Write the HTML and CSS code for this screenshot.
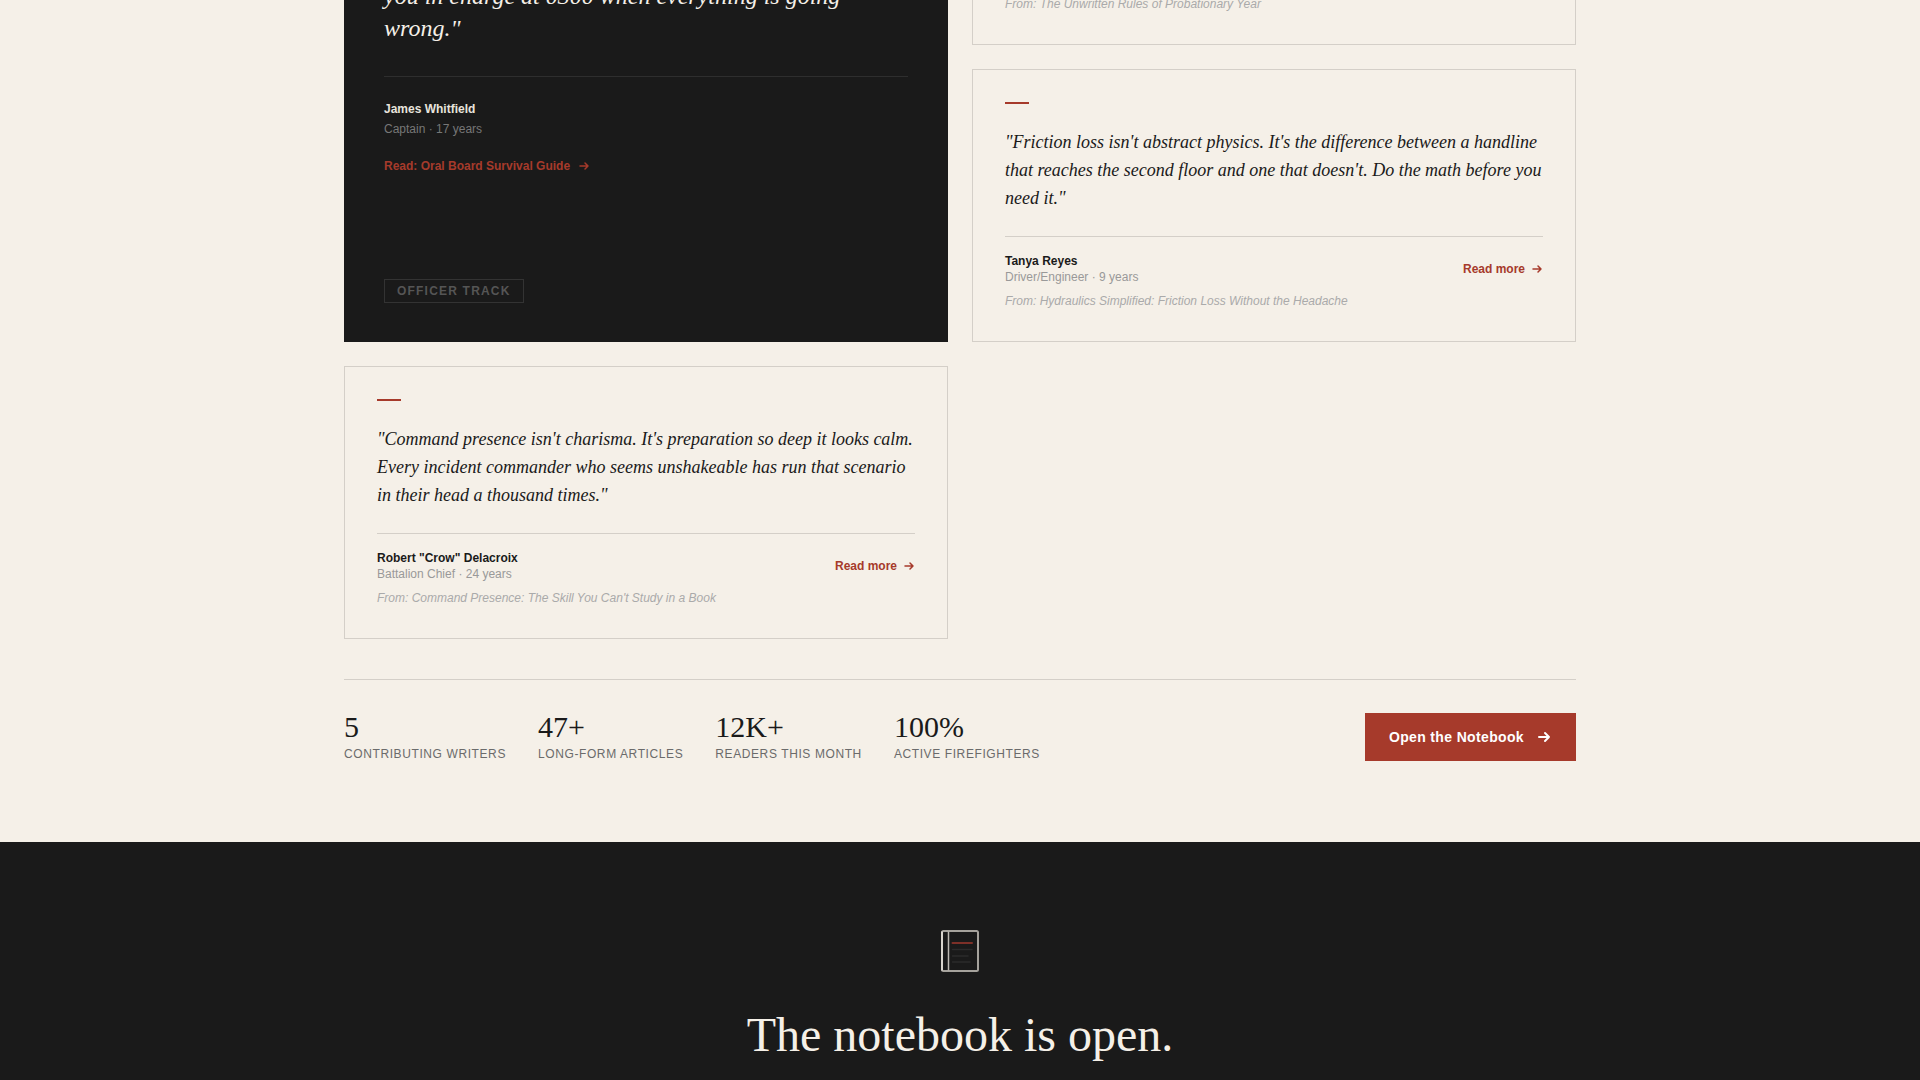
FILE: index.html
```html
<!DOCTYPE html>
<html lang="en">
<head>
<meta charset="utf-8">
<meta name="viewport" content="width=device-width, initial-scale=1">
<title>The Notebook</title>
<link rel="stylesheet" href="styles.css">
</head>
<body>
<main>
  <section class="voices">
    <div class="container">
      <div class="voices-grid">
        <article class="feature">
          <blockquote class="feature-quote">you in charge at 0300 when everything is going wrong."</blockquote>
          <div class="feature-author">
            <p class="name">James Whitfield</p>
            <p class="role">Captain · 17 years</p>
            <a class="read-link" href="#">Read: Oral Board Survival Guide
              <svg class="arrow" viewBox="0 0 12 12" aria-hidden="true"><path d="M2 6h8M7 3l3 3-3 3"/></svg>
            </a>
          </div>
          <span class="tag">Officer Track</span>
        </article>

        <article class="card card-first">
          <p class="source">From: The Unwritten Rules of Probationary Year</p>
        </article>

        <article class="card">
          <div class="accent"></div>
          <blockquote class="quote">"Friction loss isn't abstract physics. It's the difference between a handline that reaches the second floor and one that doesn't. Do the math before you need it."</blockquote>
          <div class="byline">
            <div>
              <p class="name">Tanya Reyes</p>
              <p class="role">Driver/Engineer · 9 years</p>
            </div>
            <a class="read-link" href="#">Read more
              <svg class="arrow" viewBox="0 0 12 12" aria-hidden="true"><path d="M2 6h8M7 3l3 3-3 3"/></svg>
            </a>
          </div>
          <p class="source">From: Hydraulics Simplified: Friction Loss Without the Headache</p>
        </article>

        <article class="card">
          <div class="accent"></div>
          <blockquote class="quote">"Command presence isn't charisma. It's preparation so deep it looks calm. Every incident commander who seems unshakeable has run that scenario in their head a thousand times."</blockquote>
          <div class="byline">
            <div>
              <p class="name">Robert "Crow" Delacroix</p>
              <p class="role">Battalion Chief · 24 years</p>
            </div>
            <a class="read-link" href="#">Read more
              <svg class="arrow" viewBox="0 0 12 12" aria-hidden="true"><path d="M2 6h8M7 3l3 3-3 3"/></svg>
            </a>
          </div>
          <p class="source">From: Command Presence: The Skill You Can't Study in a Book</p>
        </article>
      </div>

      <div class="summary">
        <dl class="stats">
          <div class="stat"><dt>Contributing Writers</dt><dd>5</dd></div>
          <div class="stat"><dt>Long-form Articles</dt><dd>47+</dd></div>
          <div class="stat"><dt>Readers This Month</dt><dd>12K+</dd></div>
          <div class="stat"><dt>Active Firefighters</dt><dd>100%</dd></div>
        </dl>
        <a class="cta" href="#notebook">Open the Notebook
          <svg class="cta-arrow" viewBox="0 0 16 16" aria-hidden="true"><path d="M3 8h10M9 4l4 4-4 4"/></svg>
        </a>
      </div>
    </div>
  </section>

  <section class="notebook" id="notebook">
    <svg class="book" viewBox="0 0 56 56" aria-hidden="true">
      <g fill="none" stroke="#a5a29c" stroke-width="2">
        <rect x="10" y="9" width="36" height="40" rx="1.5"/>
        <path d="M10 9.5v39" stroke="#d8d4cd"/>
        <path d="M16.500 9.500v39" stroke="#bcb8b2" stroke-width="1.5"/>
      </g>
      <path d="M20.500 21h19.500" stroke="#7d3028" stroke-width="2" stroke-linecap="round"/>
      <path d="M20.500 27.500h19.500M20.500 34h15.500M20.500 40h17.500" stroke="#2b2b2b" stroke-width="1.5" stroke-linecap="round"/>
    </svg>
    <h2 class="notebook-title">The notebook is open.</h2>
  </section>
</main>
</body>
</html>
```

FILE: styles.css
```css
:root {
  --paper: #f5f0e8;
  --ink: #1a1a1a;
  --red: #a63a2b;
  --line: #d4cfc8;
  --serif: "Liberation Serif", "Times New Roman", serif;
  --sans: "Liberation Sans", Arial, sans-serif;
}

* {
  box-sizing: border-box;
}

body,
p,
dl,
dd,
h2,
blockquote {
  margin: 0;
}

html {
  background: var(--ink);
}

body {
  overflow: hidden;
  font-family: var(--sans);
  font-size: 12px;
  line-height: 16px;
  color: var(--ink);
}

.voices {
  background: var(--paper);
  padding-bottom: 80px;
}

.container {
  max-width: 1280px;
  margin: 0 auto;
  padding: 0 24px;
}

.voices-grid {
  display: grid;
  grid-template-columns: repeat(2, minmax(0, 1fr));
  gap: 24px;
  margin-top: -20px;
}

.feature {
  grid-row: span 2;
  display: flex;
  flex-direction: column;
  align-items: flex-start;
  justify-content: space-between;
  padding: 0 40px 39px;
  background: var(--ink);
}

.feature-quote {
  font-family: var(--serif);
  font-size: 24px;
  font-style: italic;
  line-height: 32px;
  color: var(--paper);
}

.feature-author {
  align-self: stretch;
  margin: 32px 0 auto;
  padding-top: 24px;
  border-top: 1px solid #2e2e2e;
}

.feature .name {
  color: #e8e4dd;
}

.feature .role {
  margin: 4px 0 21px;
  color: #777777;
}

.feature .read-link {
  gap: 8px;
}

.tag {
  padding: 3px 12px;
  border: 1px solid #333333;
  font-weight: 700;
  letter-spacing: 0.1em;
  text-transform: uppercase;
  color: #555555;
}

.card {
  padding: 32px;
  border: 1px solid var(--line);
}

.card-first {
  padding-top: 8px;
  border-top: 0;
}

.accent {
  width: 24px;
  height: 2px;
  margin-bottom: 24px;
  background: var(--red);
}

.quote {
  font-family: var(--serif);
  font-size: 18px;
  font-style: italic;
  line-height: 28px;
}

.byline {
  display: flex;
  align-items: center;
  justify-content: space-between;
  margin-top: 24px;
  padding-top: 16px;
  border-top: 1px solid var(--line);
}

.name {
  font-weight: 700;
}

.role {
  color: #999999;
}

.source {
  margin-top: 8px;
  font-style: italic;
  color: #aaaaaa;
}

.read-link {
  display: inline-flex;
  align-items: center;
  gap: 6px;
  font-weight: 700;
  color: var(--red);
  text-decoration: none;
}

.arrow,
.cta-arrow {
  width: 12px;
  height: 12px;
  fill: none;
  stroke: currentColor;
  stroke-width: 1.5;
  stroke-linecap: round;
  stroke-linejoin: round;
}

.summary {
  display: flex;
  flex-wrap: wrap;
  align-items: center;
  justify-content: space-between;
  gap: 32px;
  margin-top: 40px;
  padding-top: 32px;
  border-top: 1px solid var(--line);
}

.stats {
  display: flex;
  flex-wrap: wrap;
  gap: 32px;
}

.stat {
  display: flex;
  flex-direction: column-reverse;
  gap: 4px;
}

.stat dt {
  letter-spacing: 0.05em;
  text-transform: uppercase;
  color: #6b6b6b;
}

.stat dd {
  font-family: var(--serif);
  font-size: 30px;
  line-height: 30px;
}

.cta {
  display: inline-flex;
  align-items: center;
  gap: 12px;
  padding: 14px 24px;
  background: var(--red);
  font-size: 14px;
  font-weight: 700;
  line-height: 20px;
  letter-spacing: 0.025em;
  color: #ffffff;
  text-decoration: none;
}

.cta-arrow {
  width: 16px;
  height: 16px;
  stroke-width: 2;
}

.notebook {
  display: flex;
  flex-direction: column;
  align-items: center;
  padding: 80px 24px;
  background: var(--ink);
}

.book {
  width: 56px;
  height: 56px;
  margin-bottom: 32px;
}

.notebook-title {
  font-family: var(--serif);
  font-size: 48px;
  font-weight: 400;
  line-height: 50px;
  text-align: center;
  color: var(--paper);
}
```
